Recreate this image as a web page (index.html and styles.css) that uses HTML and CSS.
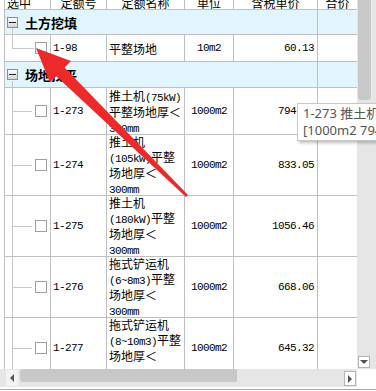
FILE: index.html
```html
<!DOCTYPE html>
<html lang="zh">
<head>
<meta charset="utf-8">
<title>定额</title>
<link rel="stylesheet" href="styles.css">
</head>
<body>
<div class="win">
  <div class="main">
    <div class="viewport">
      <div class="grid">
        <div class="row head">
          <div class="cell sel-h">选中</div>
          <div class="cell">定额号</div>
          <div class="cell">定额名称</div>
          <div class="cell">单位</div>
          <div class="cell">含税单价</div>
          <div class="cell">合价</div>
        </div>

        <div class="row group">
          <div class="cell gcell"><span class="exp"></span><span class="gtitle">土方挖填</span></div>
          <div class="cell"></div>
        </div>
        <div class="row r1">
          <div class="cell sel last"><span class="cb"></span></div>
          <div class="cell code en">1-98</div>
          <div class="cell name"><div>平整场地</div></div>
          <div class="cell unit en">10m2</div>
          <div class="cell val en">60.13</div>
          <div class="cell"></div>
        </div>

        <div class="row group g2">
          <div class="cell gcell"><span class="exp"></span><span class="gtitle">场地找平</span></div>
          <div class="cell"></div>
        </div>
        <div class="row r3">
          <div class="cell sel"><span class="cb"></span></div>
          <div class="cell code en">1-273</div>
          <div class="cell name"><div>推土机<span class="en">(75kW)</span><br>平整场地厚＜<br><span class="en">300mm</span></div></div>
          <div class="cell unit en">1000m2</div>
          <div class="cell val en">794.36</div>
          <div class="cell"></div>
        </div>
        <div class="row r4">
          <div class="cell sel"><span class="cb"></span></div>
          <div class="cell code en">1-274</div>
          <div class="cell name"><div>推土机<br><span class="en">(105kW)</span>平整<br>场地厚＜<br><span class="en">300mm</span></div></div>
          <div class="cell unit en">1000m2</div>
          <div class="cell val en">833.05</div>
          <div class="cell"></div>
        </div>
        <div class="row r4">
          <div class="cell sel"><span class="cb"></span></div>
          <div class="cell code en">1-275</div>
          <div class="cell name"><div>推土机<br><span class="en">(180kW)</span>平整<br>场地厚＜<br><span class="en">300mm</span></div></div>
          <div class="cell unit en">1000m2</div>
          <div class="cell val en">1056.46</div>
          <div class="cell"></div>
        </div>
        <div class="row r4">
          <div class="cell sel"><span class="cb"></span></div>
          <div class="cell code en">1-276</div>
          <div class="cell name"><div>拖式铲运机<br><span class="en">(6~8m3)</span>平整<br>场地厚＜<br><span class="en">300mm</span></div></div>
          <div class="cell unit en">1000m2</div>
          <div class="cell val en">668.06</div>
          <div class="cell"></div>
        </div>
        <div class="row r4">
          <div class="cell sel"><span class="cb"></span></div>
          <div class="cell code en">1-277</div>
          <div class="cell name"><div>拖式铲运机<br><span class="en">(8~10m3)</span>平整<br>场地厚＜<br><span class="en">300mm</span></div></div>
          <div class="cell unit en">1000m2</div>
          <div class="cell val en">645.32</div>
          <div class="cell"></div>
        </div>
      </div>
    </div>
    <div class="vscroll">
      <div class="vthumb"></div>
      <div class="vdown"></div>
    </div>
  </div>
  <div class="bottom">
    <div class="hscroll">
      <div class="hleft"></div>
      <div class="hthumb"></div>
      <div class="hright"></div>
    </div>
    <div class="corner"></div>
  </div>
  <div class="foot"></div>

  <div class="tip">1-273 推土机(75kW)平整场地厚&lt;300mm<br>[1000m2 794.36]</div>

  <svg class="arrow" width="376" height="391" viewBox="0 0 376 391">
    <polygon points="36,48 71,61 64.5,67.5 188,195 186,197 56,76 50,82.5" fill="#ec2a2a"/>
  </svg>
</div>
</body>
</html>
```

FILE: styles.css
```css
* { box-sizing: border-box; }
html, body {
  margin: 0;
  padding: 0;
  width: 376px;
  height: 391px;
  overflow: hidden;
  background: #fff;
}
body {
  font-family: "Noto Sans CJK SC", sans-serif;
  font-size: 12px;
  color: #000;
}
.win {
  position: relative;
  width: 376px;
  height: 391px;
  display: flex;
  flex-direction: column;
  overflow: hidden;
}
.main {
  display: flex;
  height: 369px;
}
.viewport {
  width: 357px;
  height: 369px;
  overflow: hidden;
  padding-left: 4px;
}
.grid {
  border-left: 1px solid #c0c0c0;
  margin-top: -12px;
}
.row {
  display: grid;
  grid-template-columns: 46px 56px 78px 49px 84px 39px;
  border-bottom: 1px solid #c0c0c0;
}
.cell {
  border-right: 1px solid #c0c0c0;
  display: flex;
  align-items: center;
  white-space: nowrap;
  overflow: hidden;
}
.cell:last-child { border-right: 0; }

.en {
  font-family: "Liberation Mono", monospace;
  font-size: 11px;
  letter-spacing: -0.6px;
}

/* header */
.head { height: 22px; }
.head .cell {
  align-items: flex-end;
  justify-content: center;
  line-height: 12px;
}
.head .sel-h { justify-content: flex-start; padding-left: 2px; }

/* group rows */
.group { height: 25px; background: #e0f5fd; }
.group.g2 { height: 26px; }
.gcell {
  grid-column: 1 / 6;
  padding-left: 2px;
  background: linear-gradient(#c8c8c8, #c8c8c8) 7px 100% / 1px 6px no-repeat;
}
.exp {
  flex: none;
  width: 11px;
  height: 11px;
  border: 1px solid #8e8e8e;
  background:
    linear-gradient(#222, #222) center / 7px 1px no-repeat,
    linear-gradient(#fdfdfd, #d4d4d4);
}
.gtitle {
  margin-left: 7px;
  font-weight: bold;
  font-size: 13px;
  line-height: 15px;
}

/* item rows */
.r1 { height: 27px; }
.r3 { height: 47px; }
.r4 { height: 61px; }

.sel {
  background:
    linear-gradient(#c8c8c8, #c8c8c8) 7px 0 / 1px 100% no-repeat,
    linear-gradient(#c8c8c8, #c8c8c8) 7px 50% / 20px 1px no-repeat;
}
.sel.last {
  background:
    linear-gradient(#c8c8c8, #c8c8c8) 7px 0 / 1px 50% no-repeat,
    linear-gradient(#c8c8c8, #c8c8c8) 7px 50% / 22px 1px no-repeat;
}
.cb {
  flex: none;
  width: 12px;
  height: 12px;
  margin-left: 30px;
  border: 1px solid #a0a0a0;
  background: #fff;
}
.code { padding-left: 2px; }
.name { padding-left: 2px; line-height: 15px; }
.name .en { line-height: 11px; }
.unit { justify-content: center; }
.val { justify-content: flex-end; padding-right: 3px; }

/* vertical scrollbar */
.vscroll {
  width: 19px;
  height: 369px;
  background: #e6e6e6;
  display: flex;
  flex-direction: column;
  align-items: flex-start;
}
.vthumb {
  width: 13px;
  height: 100px;
  margin-left: 1px;
  background: #c8c8c8;
  border-radius: 0 0 3px 3px;
}
.vdown {
  margin-top: auto;
  margin-left: 1px;
  margin-bottom: 1px;
  width: 12px;
  height: 12px;
  background: #fff;
  border: 1px solid #b4b4b4;
  display: flex;
  align-items: center;
  justify-content: center;
}
.vdown::after {
  content: "";
  border-left: 4px solid transparent;
  border-right: 4px solid transparent;
  border-top: 4px solid #555;
}

/* horizontal scrollbar */
.bottom { display: flex; height: 18px; }
.hscroll {
  width: 357px;
  background: #e6e6e6;
  display: flex;
  align-items: flex-start;
  padding-left: 6px;
}
.hleft {
  width: 12px;
  height: 16px;
  margin-top: 1px;
  background: #f2f2f2;
  display: flex;
  align-items: center;
  justify-content: center;
}
.hleft::after {
  content: "";
  border-top: 4px solid transparent;
  border-bottom: 4px solid transparent;
  border-right: 4px solid #555;
}
.hthumb {
  margin-left: 2px;
  width: 217px;
  height: 13px;
  background: #c8c8c8;
  border-radius: 3px 0 0 3px;
}
.hright {
  margin-left: auto;
  margin-right: 1px;
  margin-top: 2px;
  width: 12px;
  height: 15px;
  background: #fff;
  border: 1px solid #b4b4b4;
  display: flex;
  align-items: center;
  justify-content: center;
}
.hright::after {
  content: "";
  border-top: 4px solid transparent;
  border-bottom: 4px solid transparent;
  border-left: 4px solid #555;
}
.corner { flex: 1; background: #fff; }
.foot {
  height: 3px;
  border-bottom: 1px solid #a8a8a8;
}

/* tooltip */
.tip {
  position: absolute;
  left: 297px;
  top: 103px;
  padding: 1px 5px;
  background: #fff;
  border: 1px solid #c8c8c8;
  box-shadow: 2px 2px 3px rgba(0, 0, 0, 0.25);
  color: #555;
  font-family: "Noto Sans", "Noto Sans CJK SC", sans-serif;
  font-size: 13px;
  line-height: 17px;
  white-space: nowrap;
}

/* annotation arrow */
.arrow {
  position: absolute;
  left: 0;
  top: 0;
  pointer-events: none;
}
```
